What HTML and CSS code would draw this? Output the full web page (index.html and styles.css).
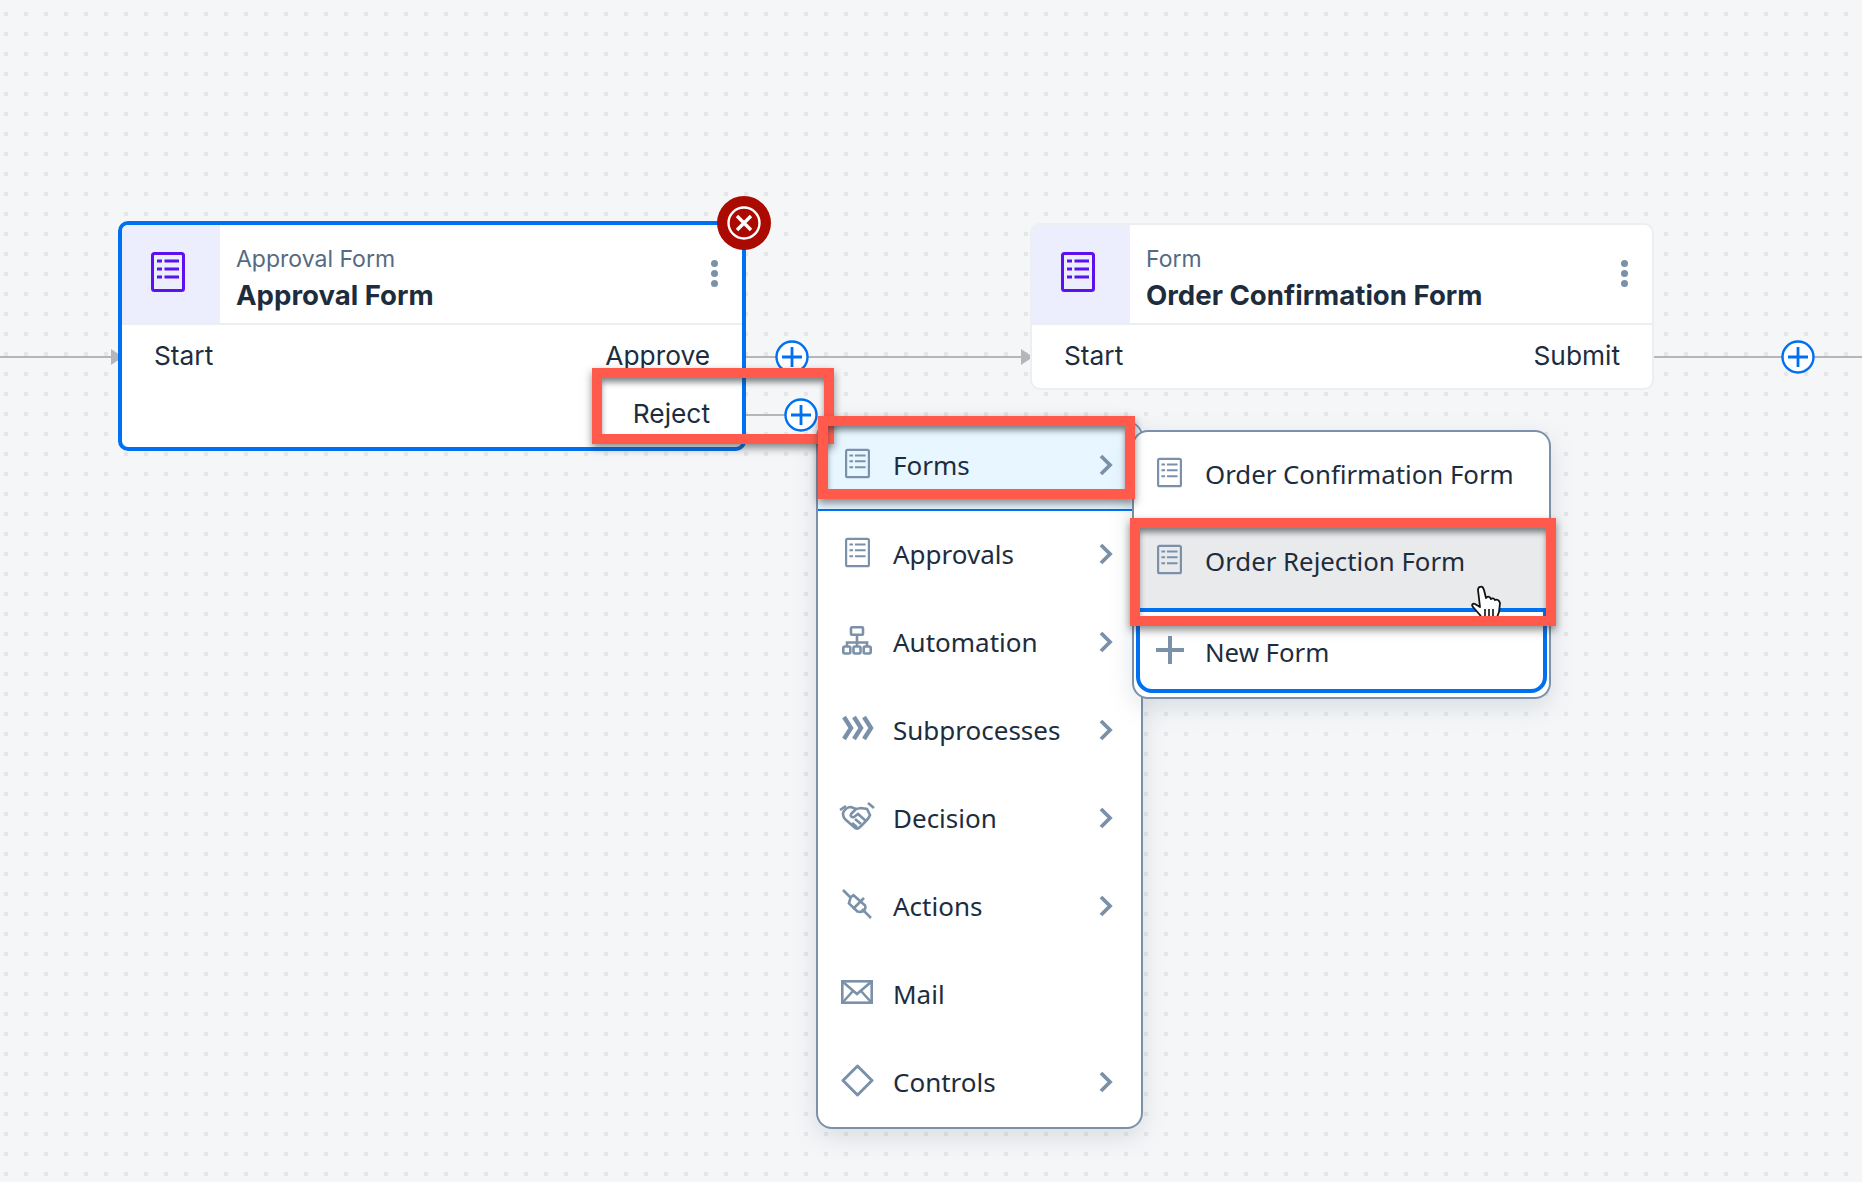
FILE: index.html
```html
<!DOCTYPE html>
<html lang="en">
<head>
    <meta charset="UTF-8">
    <title>Process Builder</title>
    <link rel="stylesheet" href="styles.css">
</head>
<body>

<svg class="defs" width="0" height="0">
    <symbol id="i-doc" viewBox="0 0 34 40">
        <rect x="1.5" y="1.5" width="31" height="37" rx="2" fill="none" stroke="currentColor" stroke-width="3"/>
        <path d="M6 9h5M13.500 9h14.500M6 17h5M13.500 17h14.500M6 25h5M13.500 25h14.500" fill="none" stroke="currentColor" stroke-width="2.800"/>
    </symbol>
    <symbol id="i-chevron" viewBox="0 0 14 22">
        <path d="M2 2l9 9-9 9" fill="none" stroke="currentColor" stroke-width="3.800"/>
    </symbol>
    <symbol id="i-plus-circle" viewBox="0 0 34 34">
        <circle cx="17" cy="17" r="15.5" fill="#fff" stroke="#0070f2" stroke-width="2.4"/>
        <path d="M17 7v20M7 17h20" fill="none" stroke="#0070f2" stroke-width="2.8"/>
    </symbol>
</svg>

<div class="canvas">
    <div class="line line-in"></div>
    <div class="arrow arrow-in"></div>
    <div class="line line-approve"></div>
    <div class="arrow arrow-next"></div>
    <div class="line line-reject"></div>
    <div class="line line-submit"></div>

    <div class="node node-approval selected">
        <div class="node-head">
            <div class="node-icon"><svg width="34" height="40"><use href="#i-doc"/></svg></div>
            <div class="node-titles">
                <div class="node-type">Approval Form</div>
                <div class="node-name">Approval Form</div>
            </div>
            <div class="node-more"><i></i><i></i><i></i></div>
        </div>
        <div class="node-body">
            <span>Start</span>
            <div class="node-outs">
                <span>Approve</span>
                <span>Reject</span>
            </div>
        </div>
    </div>

    <div class="node node-confirm">
        <div class="node-head">
            <div class="node-icon"><svg width="34" height="40"><use href="#i-doc"/></svg></div>
            <div class="node-titles">
                <div class="node-type">Form</div>
                <div class="node-name">Order Confirmation Form</div>
            </div>
            <div class="node-more"><i></i><i></i><i></i></div>
        </div>
        <div class="node-body">
            <span>Start</span>
            <div class="node-outs">
                <span>Submit</span>
            </div>
        </div>
    </div>

    <svg class="add add-approve" width="34" height="34"><use href="#i-plus-circle"/></svg>
    <svg class="add add-reject" width="34" height="34"><use href="#i-plus-circle"/></svg>
    <svg class="add add-submit" width="34" height="34"><use href="#i-plus-circle"/></svg>

    <div class="delete-btn">
        <svg width="36" height="36" viewBox="0 0 36 36">
            <circle cx="18" cy="18" r="15.5" fill="none" stroke="#fff" stroke-width="2.4"/>
            <path d="M11 11l14 14M25 11L11 25" fill="none" stroke="#fff" stroke-width="3.400"/>
        </svg>
    </div>

    <div class="menu menu-main">
        <div class="menu-row active">
            <span class="menu-icon"><svg width="25" height="33"><use href="#i-doc"/></svg></span>
            <span class="menu-text">Forms</span>
            <svg class="chev" width="14" height="22"><use href="#i-chevron"/></svg>
        </div>
        <div class="menu-row">
            <span class="menu-icon"><svg width="25" height="33"><use href="#i-doc"/></svg></span>
            <span class="menu-text">Approvals</span>
            <svg class="chev" width="14" height="22"><use href="#i-chevron"/></svg>
        </div>
        <div class="menu-row">
            <span class="menu-icon">
                <svg width="30" height="29" viewBox="0 0 30 29" fill="none" stroke="currentColor" stroke-width="2.600">
                    <rect x="9" y="1.300" width="12" height="7.500" rx="1"/>
                    <path d="M15 9v8M5 20v-3.500h20V20M15 17v3"/>
                    <rect x="1.300" y="20.500" width="7" height="7" rx="1.500"/>
                    <rect x="11.500" y="20.500" width="7" height="7" rx="1.500"/>
                    <rect x="21.700" y="20.500" width="7" height="7" rx="1.500"/>
                </svg>
            </span>
            <span class="menu-text">Automation</span>
            <svg class="chev" width="14" height="22"><use href="#i-chevron"/></svg>
        </div>
        <div class="menu-row">
            <span class="menu-icon">
                <svg width="33" height="26" viewBox="0 0 33 26" fill="none" stroke="currentColor" stroke-width="4.400">
                    <path d="M3 2l7 11-7 11M13 2l7 11-7 11M23 2l7 11-7 11"/>
                </svg>
            </span>
            <span class="menu-text">Subprocesses</span>
            <svg class="chev" width="14" height="22"><use href="#i-chevron"/></svg>
        </div>
        <div class="menu-row">
            <span class="menu-icon">
                <svg width="36" height="28" viewBox="0 0 36 28" fill="none" stroke="currentColor" stroke-width="2.600">
                    <path d="M1 8l6-4M35 6l-6-5"/>
                    <path d="M5 9c-2 3-1 6 2 9l8 7c2 2 4 2 6 0l6-6c2-2 3-3 4-6l-3-6-6-1-5 1-5-2c-2 0-4 0-7 4z"/>
                    <path d="M27 19l-8-7-4 3c-2 1-4-1-3-3l5-5M22 22l-6-5M18 25l-5-4"/>
                </svg>
            </span>
            <span class="menu-text">Decision</span>
            <svg class="chev" width="14" height="22"><use href="#i-chevron"/></svg>
        </div>
        <div class="menu-row">
            <span class="menu-icon">
                <svg width="30" height="30" viewBox="0 0 30 30" fill="none" stroke="currentColor" stroke-width="2.600">
                    <path d="M1 1l8 8M20 20l9 9"/>
                    <path d="M9 8l3-2 11 11c1 3-1 6-5 6l-3-.5L7 14z" transform="rotate(-3 15 15)"/>
                    <path d="M11 20L22 9"/>
                </svg>
            </span>
            <span class="menu-text">Actions</span>
            <svg class="chev" width="14" height="22"><use href="#i-chevron"/></svg>
        </div>
        <div class="menu-row">
            <span class="menu-icon">
                <svg width="32" height="24" viewBox="0 0 32 24" fill="none" stroke="currentColor" stroke-width="2.600">
                    <rect x="1.300" y="1.300" width="29.400" height="21.400"/>
                    <path d="M2 2l14 12L30 2M2 22l10-11M30 22L20 11"/>
                </svg>
            </span>
            <span class="menu-text">Mail</span>
        </div>
        <div class="menu-row">
            <span class="menu-icon">
                <svg width="33" height="33" viewBox="0 0 33 33" fill="none" stroke="currentColor" stroke-width="3">
                    <path d="M16.500 2L31 16.500 16.500 31 2 16.500z" stroke-linejoin="round"/>
                </svg>
            </span>
            <span class="menu-text">Controls</span>
            <svg class="chev" width="14" height="22"><use href="#i-chevron"/></svg>
        </div>
    </div>

    <div class="menu menu-sub">
        <div class="menu-row sub-row">
            <span class="menu-icon"><svg width="25" height="33"><use href="#i-doc"/></svg></span>
            <span class="menu-text">Order Confirmation Form</span>
        </div>
        <div class="menu-row sub-row hovered">
            <span class="menu-icon"><svg width="25" height="33"><use href="#i-doc"/></svg></span>
            <span class="menu-text">Order Rejection Form</span>
        </div>
        <div class="menu-row sub-row focused">
            <span class="menu-icon">
                <svg width="30" height="30" viewBox="0 0 30 30" fill="none" stroke="currentColor" stroke-width="4">
                    <path d="M15 1v28M1 15h28"/>
                </svg>
            </span>
            <span class="menu-text">New Form</span>
        </div>
    </div>

    <svg class="hand" width="32" height="36" viewBox="0 0 32 36">
        <path d="M9 2c2-1 3 0 4 3l2 8 1-1c2-1 3 0 4 2 1-1 3-1 4 1 2-1 4 0 5 3l-1 9-3 8H12l-3-5-7-8c-2-2 0-4 2-3l5 3L7 5c0-2 1-3 2-3z" fill="#fff" stroke="#111" stroke-width="1.800" stroke-linejoin="round"/>
        <path d="M14 24v8M18 24v8M22 24v8" stroke="#111" stroke-width="1.600"/>
    </svg>

    <div class="mark mark-reject"></div>
    <div class="mark mark-forms"></div>
    <div class="mark mark-rejection"></div>
</div>

</body>
</html>
```

FILE: styles.css
```css
html, body { margin: 0; padding: 0; }
body { font-family: "Noto Sans", "Open Sans", sans-serif; color: #1d2d3e; }
.defs { position: absolute; }

/* dotted workflow canvas */
.canvas {
    position: relative;
    width: 1862px;
    height: 1182px;
    overflow: hidden;
    background-color: #f5f6f8;
    background-image: conic-gradient(from 270deg at 4px 4px, #e6e6e8 25%, transparent 0);
    background-size: 20px 20px;
    background-position: 4px 12px;
}

/* connectors */
.line { position: absolute; height: 2px; background: #b4b6b9; }
.line-in { left: 0; top: 356px; width: 112px; }
.line-approve { left: 746px; top: 356px; width: 276px; }
.line-reject { left: 742px; top: 414px; width: 44px; }
.line-submit { left: 1654px; top: 356px; width: 208px; }
.arrow {
    position: absolute;
    width: 0;
    height: 0;
    border-left: 12px solid #b4b6b9;
    border-top: 8px solid transparent;
    border-bottom: 8px solid transparent;
}
.arrow-in { left: 111px; top: 349px; }
.arrow-next { left: 1021px; top: 349px; }

.add { position: absolute; }
.add-approve { left: 775px; top: 340px; }
.add-reject { left: 784px; top: 398px; }
.add-submit { left: 1781px; top: 340px; }

/* process nodes */
.node {
    position: absolute;
    box-sizing: border-box;
    background: #fff;
    border: 2px solid #eceef0;
    border-radius: 10px;
    overflow: hidden;
    font-family: Inter, "Liberation Sans", sans-serif;
}
.node-approval { left: 118px; top: 221px; width: 628px; height: 230px; }
.node-confirm { left: 1030px; top: 223px; width: 624px; height: 167px; }
.node.selected { border: 4px solid #0070f2; }

.node-head { display: flex; box-sizing: border-box; height: 100px; border-bottom: 2px solid #eceef0; }
.node-icon {
    width: 98px;
    display: flex;
    align-items: center;
    justify-content: center;
    padding: 0 6px 4px 0;
    box-sizing: border-box;
    background: #ecedfd;
    color: #5b12ee;
}
.node-titles { flex: 1; padding: 19px 0 0 16px; }
.node-type { font-size: 23px; line-height: 30px; color: #556b82; }
.node-name { margin-top: 2px; font-size: 27.6px; line-height: 38px; font-weight: 700; color: #1d2d3e; }
.node-more {
    display: flex;
    flex-direction: column;
    gap: 3px;
    padding: 35px 24px 0 0;
}
.node-more i { display: block; width: 7px; height: 7px; border-radius: 50%; background: #7b91aa; }
.node-body {
    display: flex;
    justify-content: space-between;
    padding: 11px 32px 0 32px;
    font-size: 26.3px;
    line-height: 40px;
    color: #1d2d3e;
}
.node-outs { display: flex; flex-direction: column; gap: 18px; align-items: flex-end; }

.delete-btn {
    position: absolute;
    left: 717px;
    top: 196px;
    width: 54px;
    height: 54px;
    border-radius: 50%;
    background: #aa0a00;
    display: flex;
    align-items: center;
    justify-content: center;
}

/* context menus */
.menu {
    position: absolute;
    box-sizing: border-box;
    background: #fff;
    border: 2px solid #7b91aa;
    border-radius: 16px;
    box-shadow: 0 8px 24px rgba(90, 110, 130, 0.18);
    overflow: hidden;
}
.menu-main { left: 816px; top: 421px; width: 327px; height: 708px; }
.menu-sub { left: 1132px; top: 430px; width: 419px; height: 269px; }

.menu-row {
    position: relative;
    display: flex;
    align-items: center;
    box-sizing: border-box;
    height: 88px;
    padding: 0 28px 2px 0;
    font-size: 26px;
    color: #1d2d3e;
}
.menu-icon {
    box-sizing: border-box;
    width: 75px;
    flex: none;
    display: flex;
    justify-content: center;
    padding: 0 0 4px 3px;
    color: #7b91aa;
}
.menu-text { flex: 1; white-space: nowrap; }
.chev { color: #7b91aa; }

.menu-row.active { background: #e8f6ff; border-bottom: 2px solid #0070f2; }

.sub-row { padding-bottom: 4px; font-size: 25.8px; }
.sub-row .menu-icon { width: 71px; padding-left: 0; }
.sub-row.hovered { background: #e9eaec; height: 92px; padding-bottom: 6px; border-bottom: 4px solid #fff; }
.sub-row.focused {
    height: 85px;
    margin: -4px 2px 0;
    border: 4px solid #0070f2;
    border-radius: 0 0 16px 16px;
    background: #fff;
    padding: 2px 0 0;
}
.sub-row.focused .menu-icon { width: 65px; padding-right: 6px; }

.hand { position: absolute; left: 1471px; top: 585px; }

/* red annotation frames */
.mark {
    position: absolute;
    box-sizing: border-box;
    border: 10px solid #ff5a4c;
    box-shadow: 0 4px 8px rgba(40, 45, 50, 0.55), inset 0 5px 6px -1px rgba(40, 45, 50, 0.6);
}
.mark-reject { left: 592px; top: 368px; width: 242px; height: 76px; }
.mark-forms { left: 818px; top: 416px; width: 317px; height: 83px; }
.mark-rejection { left: 1130px; top: 518px; width: 426px; height: 108px; }
```
